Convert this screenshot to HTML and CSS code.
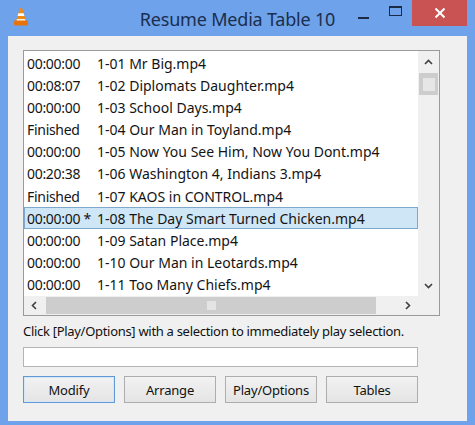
FILE: index.html
```html
<!DOCTYPE html>
<html>
<head>
<meta charset="utf-8">
<link rel="stylesheet" href="styles.css">
</head>
<body>
<div class="window">
  <div class="titlebar">
    <div class="tb-left">
      <svg class="app-icon" width="16" height="20" viewBox="0 0 16 20">
        <path d="M7 1 L9 1 L13 14 L3 14 Z" fill="#f08a12"/>
        <path d="M5.4 6.3 L10.6 6.3 L11.4 9 L4.6 9 Z" fill="#ffffff"/>
        <path d="M1 14.5 Q1 13.5 2.5 13.5 L13.5 13.5 Q15 13.5 15 14.5 L15 17 Q15 18.5 13.5 18.5 L2.5 18.5 Q1 18.5 1 17 Z" fill="#e8730a"/>
        <path d="M3.5 13.6 L12.5 13.6 L12 12 L4 12 Z" fill="#f6f0e6"/>
      </svg>
    </div>
    <div class="title">Resume Media Table 10</div>
    <div class="controls">
      <div class="ctl ctl-min"><span class="dash"></span></div>
      <div class="ctl ctl-max"><span class="box"></span></div>
      <div class="ctl ctl-close">
        <svg width="12" height="12" viewBox="0 0 12 12"><path d="M1.5 1.5 L10.5 10.5 M10.5 1.5 L1.5 10.5" stroke="#ffffff" stroke-width="2"/></svg>
      </div>
    </div>
  </div>
  <div class="client">
    <div class="listbox">
      <div class="list-main">
        <div class="rows">
          <div class="row"><span class="c1">00:00:00</span><span>1-01 Mr Big.mp4</span></div>
          <div class="row"><span class="c1">00:08:07</span><span>1-02 Diplomats Daughter.mp4</span></div>
          <div class="row"><span class="c1">00:00:00</span><span>1-03 School Days.mp4</span></div>
          <div class="row"><span class="c1">Finished</span><span>1-04 Our Man in Toyland.mp4</span></div>
          <div class="row"><span class="c1">00:00:00</span><span>1-05 Now You See Him, Now You Dont.mp4</span></div>
          <div class="row"><span class="c1">00:20:38</span><span>1-06 Washington 4, Indians 3.mp4</span></div>
          <div class="row"><span class="c1">Finished</span><span>1-07 KAOS in CONTROL.mp4</span></div>
          <div class="row selected"><span class="c1">00:00:00 *</span><span>1-08 The Day Smart Turned Chicken.mp4</span></div>
          <div class="row"><span class="c1">00:00:00</span><span>1-09 Satan Place.mp4</span></div>
          <div class="row"><span class="c1">00:00:00</span><span>1-10 Our Man in Leotards.mp4</span></div>
          <div class="row"><span class="c1">00:00:00</span><span>1-11 Too Many Chiefs.mp4</span></div>
        </div>
        <div class="vscroll">
          <div class="sb-btn">
            <svg width="9" height="6" viewBox="0 0 9 6"><path d="M1 5 L4.5 1.5 L8 5" fill="none" stroke="#404040" stroke-width="1.6"/></svg>
          </div>
          <div class="v-track">
            <div class="v-thumb"><span class="grip"></span></div>
          </div>
          <div class="sb-btn">
            <svg width="9" height="6" viewBox="0 0 9 6"><path d="M1 1 L4.5 4.5 L8 1" fill="none" stroke="#404040" stroke-width="1.6"/></svg>
          </div>
        </div>
      </div>
      <div class="hscroll-row">
        <div class="hscroll">
          <div class="sb-btn h">
            <svg width="6" height="9" viewBox="0 0 6 9"><path d="M5 1 L1.5 4.5 L5 8" fill="none" stroke="#404040" stroke-width="1.6"/></svg>
          </div>
          <div class="h-track">
            <div class="h-thumb"><span class="grip"></span></div>
          </div>
          <div class="sb-btn h">
            <svg width="6" height="9" viewBox="0 0 6 9"><path d="M1 1 L4.5 4.5 L1 8" fill="none" stroke="#404040" stroke-width="1.6"/></svg>
          </div>
        </div>
        <div class="corner"></div>
      </div>
    </div>
    <p class="hint">Click [Play/Options] with a selection to immediately play selection.</p>
    <div class="input"></div>
    <div class="buttons">
      <div class="btn default">Modify</div>
      <div class="btn">Arrange</div>
      <div class="btn">Play/Options</div>
      <div class="btn">Tables</div>
    </div>
  </div>
</div>
</body>
</html>
```
FILE: styles.css
```css
html, body {
  margin: 0;
  padding: 0;
}
body {
  font-family: "Noto Sans", "Open Sans", sans-serif;
  color: #111;
}
.window {
  width: 475px;
  height: 425px;
  background: #6ea2ea;
  display: flex;
  flex-direction: column;
  overflow: hidden;
}
.titlebar {
  height: 36px;
  display: grid;
  grid-template-columns: 1fr auto 1fr;
  align-items: start;
}
.tb-left {
  padding: 7px 0 0 13px;
}
.app-icon {
  display: block;
}
.title {
  font-size: 18px;
  line-height: 20px;
  padding-top: 9px;
  color: #1b2e4d;
  letter-spacing: -0.2px;
}
.controls {
  justify-self: end;
  display: flex;
  margin-right: 8px;
}
.ctl {
  height: 26px;
  display: flex;
  align-items: center;
  justify-content: center;
}
.ctl-min {
  width: 32px;
}
.ctl-min .dash {
  width: 11px;
  height: 2px;
  background: #1c2a44;
  margin-top: 9px;
}
.ctl-max {
  width: 33px;
}
.ctl-max .box {
  width: 11px;
  height: 7px;
  border: 1px solid #1c2a44;
  border-top-width: 2px;
  margin-top: -5px;
}
.ctl-close {
  width: 55px;
  background: #c95352;
}
.client {
  flex: 1;
  margin: 0 8px 4px 8px;
  background: #f0f0f0;
  padding: 14px 0 0 15px;
}
.listbox {
  width: 415px;
  height: 264px;
  border: 1px solid #9a9a9a;
  background: #fff;
  display: flex;
  flex-direction: column;
}
.list-main {
  flex: 1;
  display: flex;
  min-height: 0;
}
.rows {
  flex: 1;
  display: grid;
  grid-template-rows: repeat(11, 1fr);
  padding-top: 1px;
}
.row {
  display: flex;
  align-items: center;
  padding-left: 3px;
  font-size: 14px;
  white-space: nowrap;
  border: 1px solid transparent;
  border-left-width: 0;
  color: #141414;
}
.row .c1 {
  width: 70px;
  flex: none;
  letter-spacing: -0.3px;
}
.row.selected {
  background: #cfe6f6;
  border-color: #7fa9cc;
  border-left-width: 1px;
  padding-left: 2px;
}
.vscroll {
  width: 21px;
  background: #f0f0f0;
  display: flex;
  flex-direction: column;
}
.sb-btn {
  height: 21px;
  display: flex;
  align-items: center;
  justify-content: center;
  flex: none;
}
.sb-btn.h {
  width: 20px;
  height: auto;
}
.v-track {
  flex: 1;
  padding: 1px 1px 0 1px;
}
.v-thumb {
  height: 22px;
  background: #cdcdcd;
  display: flex;
  align-items: center;
  justify-content: center;
}
.v-thumb .grip {
  width: 12px;
  height: 13px;
  background: #e6e6e6;
}
.hscroll-row {
  height: 19px;
  display: flex;
}
.hscroll {
  flex: 1;
  display: flex;
  background: #f0f0f0;
}
.h-track {
  flex: 1;
  padding: 1px 22px 1px 2px;
  display: flex;
}
.h-thumb {
  flex: 1;
  background: #cdcdcd;
  display: flex;
  align-items: center;
  justify-content: center;
}
.h-thumb .grip {
  width: 9px;
  height: 9px;
  background: #e4e4e4;
}
.corner {
  width: 21px;
  background: #f0f0f0;
}
.hint {
  margin: 0;
  font-size: 13px;
  letter-spacing: -0.3px;
  line-height: 31px;
  color: #111;
  white-space: nowrap;
}
.input {
  width: 393px;
  height: 18px;
  border: 1px solid #b4b4b4;
  background: #fff;
}
.buttons {
  display: grid;
  grid-template-columns: repeat(4, 92px);
  gap: 9px;
  margin-top: 9px;
  width: 395px;
}
.btn {
  height: 25px;
  border: 1px solid #adadad;
  background: linear-gradient(#f2f2f2, #e4e4e4);
  display: flex;
  align-items: center;
  justify-content: center;
  font-size: 13px;
  letter-spacing: -0.2px;
  color: #111;
}
.btn.default {
  border-color: #5f9ad6;
  box-shadow: inset 0 0 0 1px #d6e8f8;
}
```
